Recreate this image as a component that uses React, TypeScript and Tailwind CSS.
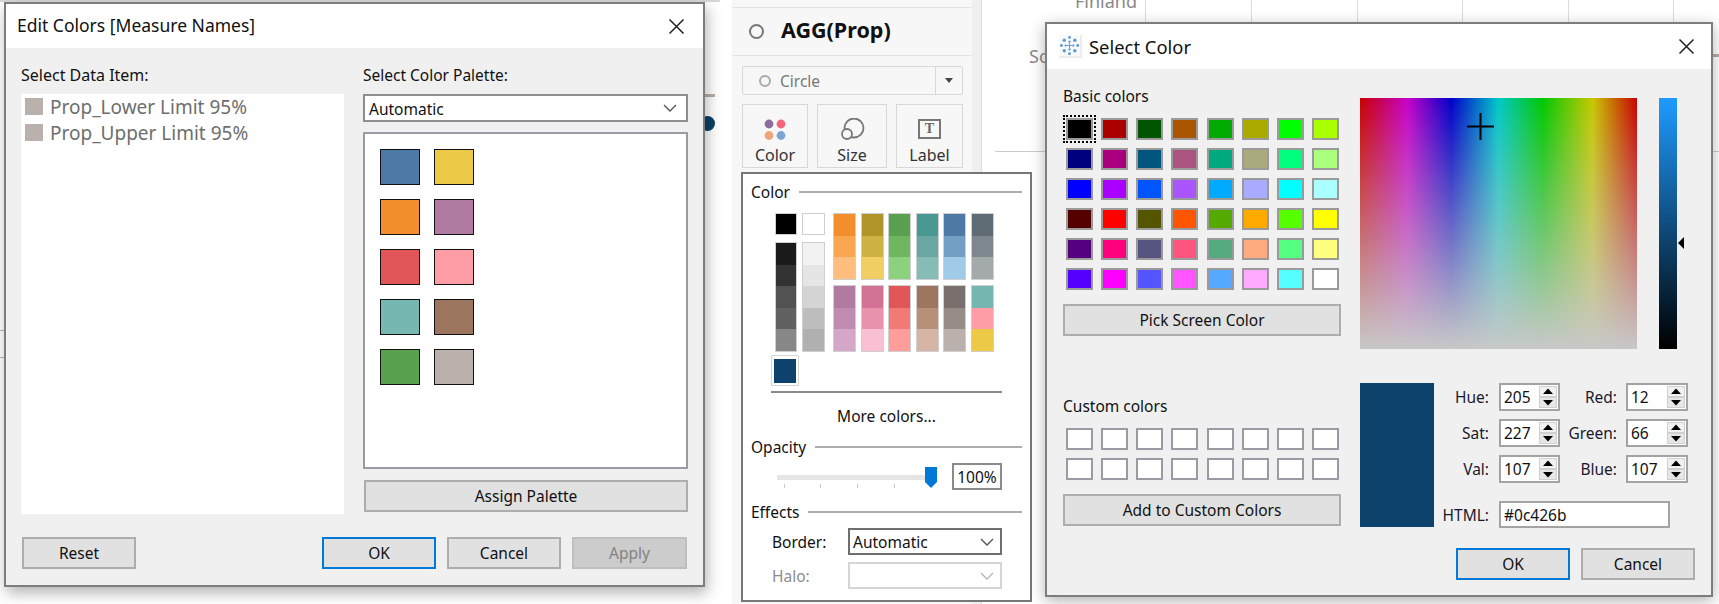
import React from "react";

const paletteSw = ["#4e79a7", "#edc948", "#f28e2b", "#b07aa1", "#e15759", "#ff9da7", "#76b7b2", "#9c755f", "#59a14f", "#bab0ac"];
const darkCol = ["#1a1a1a", "#333333", "#525252", "#616161", "#878787"];
const lightCol = ["#f2f2f2", "#e5e5e5", "#d4d4d4", "#bdbdbd", "#b0b0b0"];
const groupsTop = [
  ["#f28e2b", "#f9a650", "#ffbe7d"],
  ["#b1932a", "#d0b144", "#f1ce63"],
  ["#59a14f", "#6fb75f", "#8cd17d"],
  ["#499894", "#69a8a2", "#86bcb6"],
  ["#4e79a7", "#739fc6", "#a0cbe8"],
  ["#5f6b75", "#7f878e", "#a4a9a9"],
];
const groupsBottom = [
  ["#b07aa1", "#c08bb0", "#d4a6c8"],
  ["#d37295", "#e892ad", "#fabfd2"],
  ["#e15759", "#f17a79", "#ff9d9a"],
  ["#9d7660", "#b79078", "#d7b5a6"],
  ["#79706e", "#968c88", "#bab0ac"],
  ["#76b7b2", "#ff9da7", "#edc948"],
];
const basic = [
  "#000000", "#aa0000", "#005500", "#aa5500", "#00aa00", "#aaaa00", "#00ff00", "#aaff00",
  "#00007f", "#aa007f", "#00557f", "#aa557f", "#00aa7f", "#aaaa7f", "#00ff7f", "#aaff7f",
  "#0000ff", "#aa00ff", "#0055ff", "#aa55ff", "#00aaff", "#aaaaff", "#00ffff", "#aaffff",
  "#550000", "#ff0000", "#555500", "#ff5500", "#55aa00", "#ffaa00", "#55ff00", "#ffff00",
  "#55007f", "#ff007f", "#55557f", "#ff557f", "#55aa7f", "#ffaa7f", "#55ff7f", "#ffff7f",
  "#5500ff", "#ff00ff", "#5555ff", "#ff55ff", "#55aaff", "#ffaaff", "#55ffff", "#ffffff",
];

type Kind = "plain" | "focus" | "off";
const kinds: Record<Kind, string> = {
  plain: "border-2 border-[#adadad] bg-[#e1e1e1] text-[#111]",
  focus: "border-[2.5px] border-[#0078d7] bg-[#e1e1e1] text-[#111]",
  off: "border-2 border-[#bfbfbf] bg-[#cccccc] text-[#838383]",
};

function Btn({ children, className = "", kind = "plain" }: { children: React.ReactNode; className?: string; kind?: Kind }) {
  return <div className={`flex h-[32px] items-center justify-center ${kinds[kind]} ${className}`}>{children}</div>;
}

function Close() {
  return (
    <svg width="17" height="17" viewBox="0 0 17 17" className="shrink-0">
      <path d="M1.5 1.5 L15.5 15.5 M15.5 1.5 L1.5 15.5" stroke="#222" strokeWidth="1.5" fill="none" />
    </svg>
  );
}

function Chevron({ color = "#555" }: { color?: string }) {
  return (
    <svg width="14" height="8" viewBox="0 0 14 8">
      <path d="M1 1 L7 7 L13 1" stroke={color} strokeWidth="1.4" fill="none" />
    </svg>
  );
}

function Heading({ title, mt }: { title: string; mt: string }) {
  return (
    <div className={`flex h-[24px] items-center gap-[9px] pl-[8px] pr-[8px] ${mt}`}>
      <span className="text-[#111]">{title}</span>
      <div className="h-[2px] flex-1 bg-[#adadad]" />
    </div>
  );
}

function ColorStack({ colors, h }: { colors: string[]; h: string }) {
  return (
    <div className={`flex flex-col border border-[#cfcfcf] ${h}`}>
      {colors.map((c, i) => (
        <div key={i} className="flex-1" style={{ backgroundColor: c }} />
      ))}
    </div>
  );
}

function Spin({ value, className = "" }: { value: string; className?: string }) {
  return (
    <div className={`flex h-[28px] items-center justify-between border-2 border-[#a3a3a3] bg-white pl-[3px] pr-[1px] text-[#111] ${className}`}>
      <span>{value}</span>
      <svg width="18" height="22" viewBox="0 0 18 22" className="shrink-0">
        <rect x="0.5" y="0.5" width="17" height="10" fill="#f0f0f0" stroke="#d0d0d0" />
        <rect x="0.5" y="11.5" width="17" height="10" fill="#e6e6e6" stroke="#d0d0d0" />
        <polygon points="9,2.5 14,8 4,8" fill="#000" />
        <polygon points="9,19.5 14,14 4,14" fill="#000" />
      </svg>
    </div>
  );
}

function Field({ label, value, right }: { label: string; value: string; right?: boolean }) {
  return (
    <>
      <span className={`text-right text-[#1a1a2e] ${right ? "w-[57px]" : "w-[55px]"}`}>{label}</span>
      <Spin value={value} className={right ? "ml-[9px] w-[62px]" : "ml-[10px] w-[61px]"} />
    </>
  );
}

function TileIcon() {
  const dots: [number, number, number][] = [
    [12, 3.5, 1.5], [12, 20.5, 1.5], [3.5, 12, 1.5], [20.5, 12, 1.5],
    [6.5, 6.5, 1.8], [17.5, 6.5, 1.8], [6.5, 17.5, 1.8], [17.5, 17.5, 1.8],
    [12, 8, 1.2], [12, 16, 1.2], [8, 12, 1.2], [16, 12, 1.2],
  ];
  return (
    <svg width="23" height="23" viewBox="0 0 24 24" className="shrink-0">
      <rect x="0" y="0" width="24" height="24" fill="#ececec" />
      <rect x="0" y="0" width="22" height="22" fill="#fafafa" />
      {dots.map(([x, y, r], i) => (
        <circle key={i} cx={x - 1} cy={y - 1} r={r} fill="#5b9bd5" />
      ))}
      <path d="M11 8 V14 M8 11 H14" stroke="#5b9bd5" strokeWidth="1" />
    </svg>
  );
}

export default function App() {
  return (
    <div className="relative h-[604px] w-[1719px] overflow-hidden bg-white font-['Noto_Sans',sans-serif] text-[15.5px] leading-[24px]">
      {/* backdrop: chart behind the windows */}
      <div className="absolute left-0 top-0 h-[2px] w-[720px] bg-[#d8d8d8]" />
      <div className="absolute left-0 top-[330px] h-px w-[5px] bg-[#bbb]" />
      <div className="absolute left-0 top-[357px] h-px w-[5px] bg-[#bbb]" />
      <div className="absolute left-[705px] top-[94px] h-[3px] w-[10px] bg-[#b8ada6]" />
      <div className="absolute left-[700px] top-[116px] h-[15px] w-[15px] rounded-full bg-[#0c426b]" />
      <div className="absolute left-[732px] top-[544px] h-px w-[9px] bg-[#ddd]" />
      <div className="absolute left-[732px] top-[388px] h-px w-[9px] bg-[#ddd]" />
      <div className="absolute left-[737px] top-[454px] h-[16px] w-[16px] rounded-full bg-[#2fb08b]" />
      <div className="absolute left-[737px] top-[487px] h-[16px] w-[16px] rounded-full bg-[#2fb08b]" />
      <div className="absolute left-[1075px] top-[-11px] text-[18px] text-[#8a8a8a]">Finland</div>
      <div className="absolute left-[1029px] top-[44px] text-[18px] text-[#8a8a8a]">So</div>
      <div className="absolute left-[995px] top-[151px] h-px w-[724px] bg-[#ccc]" />
      <div className="absolute left-[1713px] top-[54px] h-[3px] w-[6px] bg-[#b8ada6]" />
      {[1145, 1251, 1357, 1462, 1568, 1673].map((x) => (
        <div key={x} className="absolute top-0 h-[22px] w-px bg-[#dcdcdc]" style={{ left: x }} />
      ))}

      {/* Tableau marks card */}
      <div className="absolute left-[732px] top-0 flex h-[604px] w-[250px] border-r border-[#dcdcdc] bg-[#efefef]">
        <div className="h-full w-[240px] bg-[#f7f7f7]">
          <div className="h-[8px] border-b border-[#e2e2e2]" />
          <div className="flex h-[48px] items-center border-b border-[#e2e2e2] pl-[17px]">
            <div className="h-[15px] w-[15px] rounded-full border-2 border-[#777]" />
            <span className="mb-[3px] ml-[17px] text-[21.5px] font-bold text-[#111]">AGG(Prop)</span>
          </div>
          <div className="px-[10px] pt-[10px]">
            <div className="flex h-[29px] w-[221px] items-center rounded-[2px] border border-[#d8d8d8] text-[#777]">
              <div className="ml-[16px] h-[12px] w-[12px] rounded-full border-2 border-[#aaa]" />
              <span className="ml-[9px] flex-1">Circle</span>
              <div className="flex h-full w-[27px] items-center justify-center border-l border-[#d8d8d8]">
                <div className="h-0 w-0 border-x-[4px] border-t-[5px] border-x-transparent border-t-[#444]" />
              </div>
            </div>
            <div className="mt-[9px] flex w-[221px] gap-[9px] text-[16px] text-[#333]">
              <div className="flex h-[64px] w-[66px] flex-col items-center justify-end border border-[#d8d8d8]">
                <svg width="22" height="22" viewBox="0 0 22 22" className="mb-[2px]">
                  <circle cx="5" cy="5" r="4.4" fill="#8a6d9b" />
                  <circle cx="17" cy="5" r="4.4" fill="#f2667c" />
                  <circle cx="5" cy="16.5" r="4.4" fill="#f0a578" />
                  <circle cx="17" cy="16.5" r="4.4" fill="#7ba7d0" />
                </svg>
                <span>Color</span>
              </div>
              <div className="flex h-[64px] w-[70px] flex-col items-center justify-end border border-[#d8d8d8]">
                <svg width="26" height="24" viewBox="0 0 26 24" className="mb-[1px]">
                  <circle cx="15" cy="10" r="9.5" fill="none" stroke="#777" strokeWidth="1.8" />
                  <circle cx="8" cy="16" r="5" fill="#f7f7f7" stroke="#777" strokeWidth="1.8" />
                </svg>
                <span>Size</span>
              </div>
              <div className="flex h-[64px] w-[67px] flex-col items-center justify-end border border-[#d8d8d8]">
                <div className="mb-[4px] flex h-[20px] w-[23px] items-center justify-center border-2 border-[#777] font-['Liberation_Serif',serif] text-[14px] font-bold leading-none text-[#666]">
                  T
                </div>
                <span>Label</span>
              </div>
            </div>
          </div>
        </div>
      </div>

      {/* Edit Colors dialog */}
      <div className="absolute left-[4px] top-[2px] flex h-[585px] w-[701px] flex-col border-2 border-[#7d7d7d] bg-[#f0f0f0] shadow-[2px_6px_14px_rgba(0,0,0,0.3)]">
        <div className="flex h-[44px] items-center justify-between bg-white pl-[11px] pr-[18px] text-[17.5px] text-[#111]">
          <span className="mb-[2px]">Edit Colors [Measure Names]</span>
          <Close />
        </div>
        <div className="flex flex-col pl-[15px] pt-[15px]">
          <div className="flex gap-[19px]">
            <div className="w-[323px]">
              <div className="h-[24px] text-[16px] text-[#111]">Select Data Item:</div>
              <div className="mt-[7px] h-[420px] bg-white pl-[4px] pt-[4px] text-[#6e6e6e]">
                {["Prop_Lower Limit 95%", "Prop_Upper Limit 95%"].map((t) => (
                  <div key={t} className="mb-[9px] flex h-[17px] items-center gap-[7px]">
                    <div className="h-[17px] w-[18px] bg-[#bab0ac]" />
                    <span className="text-[19px]">{t}</span>
                  </div>
                ))}
              </div>
            </div>
            <div className="w-[325px]">
              <div className="h-[24px] text-[#111]">Select Color Palette:</div>
              <div className="mt-[7px] flex h-[28px] items-center justify-between border-2 border-[#8e8e8e] bg-white pl-[4px] pr-[9px] text-[#111]">
                <span className="pt-[1px]">Automatic</span>
                <Chevron />
              </div>
              <div className="mt-[10px] h-[337px] border-2 border-[#9a9aa5] bg-white pl-[15px] pt-[15px]">
                <div className="grid w-[94px] grid-cols-2 gap-x-[14px] gap-y-[14px]">
                  {paletteSw.map((c) => (
                    <div key={c} className="h-[36px] border-[1.5px] border-[#111]" style={{ backgroundColor: c }} />
                  ))}
                </div>
              </div>
              <Btn className="ml-[1px] mt-[11px] w-[324px]">Assign Palette</Btn>
            </div>
          </div>
          <div className="mt-[23px] flex w-[667px] pl-[1px]">
            <Btn className="w-[114px]">Reset</Btn>
            <Btn kind="focus" className="ml-[186px] w-[114px]">OK</Btn>
            <Btn className="ml-[11px] w-[114px]">Cancel</Btn>
            <Btn kind="off" className="ml-[11px] w-[115px]">Apply</Btn>
          </div>
        </div>
      </div>

      {/* Color popup */}
      <div className="absolute left-[741px] top-[172px] h-[430px] w-[291px] border-2 border-[#777] bg-white">
        <Heading title="Color" mt="mt-[6px]" />
        <div className="ml-[32px] mt-[9px] flex">
          <div className="flex flex-col gap-[7px]">
            <div className="flex gap-[5px]">
              <div className="h-[22px] w-[22px] border border-[#cfcfcf] bg-black" />
              <div className="h-[22px] w-[23px] border border-[#cfcfcf] bg-white" />
            </div>
            <div className="flex gap-[5px]">
              <div className="w-[22px]"><ColorStack colors={darkCol} h="h-[110px]" /></div>
              <div className="w-[23px]"><ColorStack colors={lightCol} h="h-[110px]" /></div>
            </div>
          </div>
          <div className="ml-[8px] flex flex-col gap-[5px]">
            <div className="flex gap-[4.5px]">
              {groupsTop.map((g, i) => (
                <div key={i} className="w-[23px]"><ColorStack colors={g} h="h-[67px]" /></div>
              ))}
            </div>
            <div className="flex gap-[4.5px]">
              {groupsBottom.map((g, i) => (
                <div key={i} className="w-[23px]"><ColorStack colors={g} h="h-[67px]" /></div>
              ))}
            </div>
          </div>
        </div>
        <div className="ml-[28px] mt-[3px] flex h-[31px] w-[28px] items-center justify-center border border-[#d5d5d5]">
          <div className="h-[24px] w-[22px] bg-[#0c426b]" />
        </div>
        <div className="ml-[28px] mt-[5px] h-[2px] w-[231px] bg-[#8a8a8a]" />
        <div className="ml-[28px] mt-[11px] w-[231px] text-center text-[#111]">More colors...</div>
        <Heading title="Opacity" mt="mt-[7px]" />
        <div className="ml-[34px] mt-[4px] flex h-[27px] items-center">
          <div className="relative h-[27px] w-[160px]">
            <div className="absolute left-0 top-[12px] h-[5px] w-[160px] bg-[#e5e5e5]" />
            {[7, 43, 80, 117].map((x) => (
              <div key={x} className="absolute top-[21px] h-[4px] w-px bg-[#c8c8c8]" style={{ left: x }} />
            ))}
            <svg width="12" height="21" viewBox="0 0 12 21" className="absolute left-[148px] top-[4px]">
              <path d="M0 0 H12 V15 L6 21 L0 15 Z" fill="#0078d7" />
            </svg>
          </div>
          <div className="ml-[15px] flex h-[27px] w-[50px] items-center justify-center border-2 border-[#8a8a8a] text-[#111]">100%</div>
        </div>
        <Heading title="Effects" mt="mt-[10px]" />
        <div className="ml-[29px] mt-[4px] flex h-[27px] items-center">
          <span className="w-[76px] text-[#111]">Border:</span>
          <div className="flex h-[27px] w-[154px] items-center justify-between border-2 border-[#6e6e6e] pl-[3px] pr-[6px] text-[#111]">
            <span>Automatic</span>
            <Chevron />
          </div>
        </div>
        <div className="ml-[29px] mt-[7px] flex h-[27px] items-center">
          <span className="w-[76px] text-[#8c8c8c]">Halo:</span>
          <div className="flex h-[27px] w-[154px] items-center justify-end border-2 border-[#d5d5d5] pr-[6px]">
            <Chevron color="#b5b5b5" />
          </div>
        </div>
      </div>

      {/* Select Color dialog */}
      <div className="absolute left-[1045px] top-[22px] flex h-[575px] w-[668px] flex-col border-2 border-[#7d7d7d] bg-[#f0f0f0] shadow-[0_4px_14px_rgba(0,0,0,0.3)]">
        <div className="flex h-[45px] items-center justify-between bg-white pl-[12px] pr-[16px]">
          <div className="flex items-center gap-[7px] text-[18.4px] text-[#111]">
            <TileIcon />
            <span>Select Color</span>
          </div>
          <Close />
        </div>
        <div className="flex pl-[16px]">
          <div className="w-[278px] pt-[15px]">
            <div className="h-[24px] text-[#111]">Basic colors</div>
            <div className="ml-[3px] mt-[10px] grid w-[273px] grid-cols-8 gap-[8px]">
              {basic.map((c, i) => (
                <div
                  key={i}
                  className={`h-[22px] w-[27px] border-2 border-[#9a9a9a] ${i === 0 ? "outline-2 outline-offset-[1px] outline-dotted outline-black" : ""}`}
                  style={{ backgroundColor: c }}
                />
              ))}
            </div>
            <Btn className="mt-[14px] w-[278px]">Pick Screen Color</Btn>
            <div className="mt-[58px] h-[24px] text-[#111]">Custom colors</div>
            <div className="ml-[3px] mt-[10px] grid w-[273px] grid-cols-8 gap-[8px]">
              {Array.from({ length: 16 }).map((_, i) => (
                <div key={i} className="h-[22px] w-[27px] border-2 border-[#9a9aa5] bg-white" />
              ))}
            </div>
            <Btn className="mt-[14px] w-[278px]">Add to Custom Colors</Btn>
          </div>
          <div className="ml-[19px] w-[335px] pt-[29px]">
            <div className="flex gap-[22px]">
              <div className="relative h-[251px] w-[277px] bg-[linear-gradient(to_bottom,transparent,#c8c8c8),linear-gradient(to_right,#c80000,#c800c8_17%,#0000c8_33%,#00c8c8_50%,#00c800_66%,#c8c800_84%,#c80000)]">
                <svg width="27" height="27" viewBox="0 0 27 27" className="absolute left-[107px] top-[15px]">
                  <path d="M13.5 0 V27 M0 13.5 H27" stroke="#000" strokeWidth="2" />
                </svg>
              </div>
              <div className="relative h-[251px] w-[18px] bg-[linear-gradient(to_bottom,#1e9bff,#000)]">
                <div className="absolute left-[19px] top-[139px] h-0 w-0 border-y-[6px] border-r-[6px] border-y-transparent border-r-black" />
              </div>
            </div>
            <div className="mt-[34px] flex">
              <div className="h-[144px] w-[74px] bg-[#0c426b]" />
              <div className="flex flex-col gap-[8px]">
                <div className="flex items-center"><Field label="Hue:" value="205" /><Field right label="Red:" value="12" /></div>
                <div className="flex items-center"><Field label="Sat:" value="227" /><Field right label="Green:" value="66" /></div>
                <div className="flex items-center"><Field label="Val:" value="107" /><Field right label="Blue:" value="107" /></div>
                <div className="mt-[10px] flex items-center">
                  <span className="w-[55px] text-right text-[#1a1a2e]">HTML:</span>
                  <div className="ml-[10px] flex h-[27px] w-[171px] items-center border-2 border-[#a3a3a3] bg-white pl-[3px] text-[#111]">#0c426b</div>
                </div>
              </div>
            </div>
            <div className="mt-[20px] flex justify-end gap-[11px]">
              <Btn kind="focus" className="w-[114px]">OK</Btn>
              <Btn className="w-[114px]">Cancel</Btn>
            </div>
          </div>
        </div>
      </div>
    </div>
  );
}
